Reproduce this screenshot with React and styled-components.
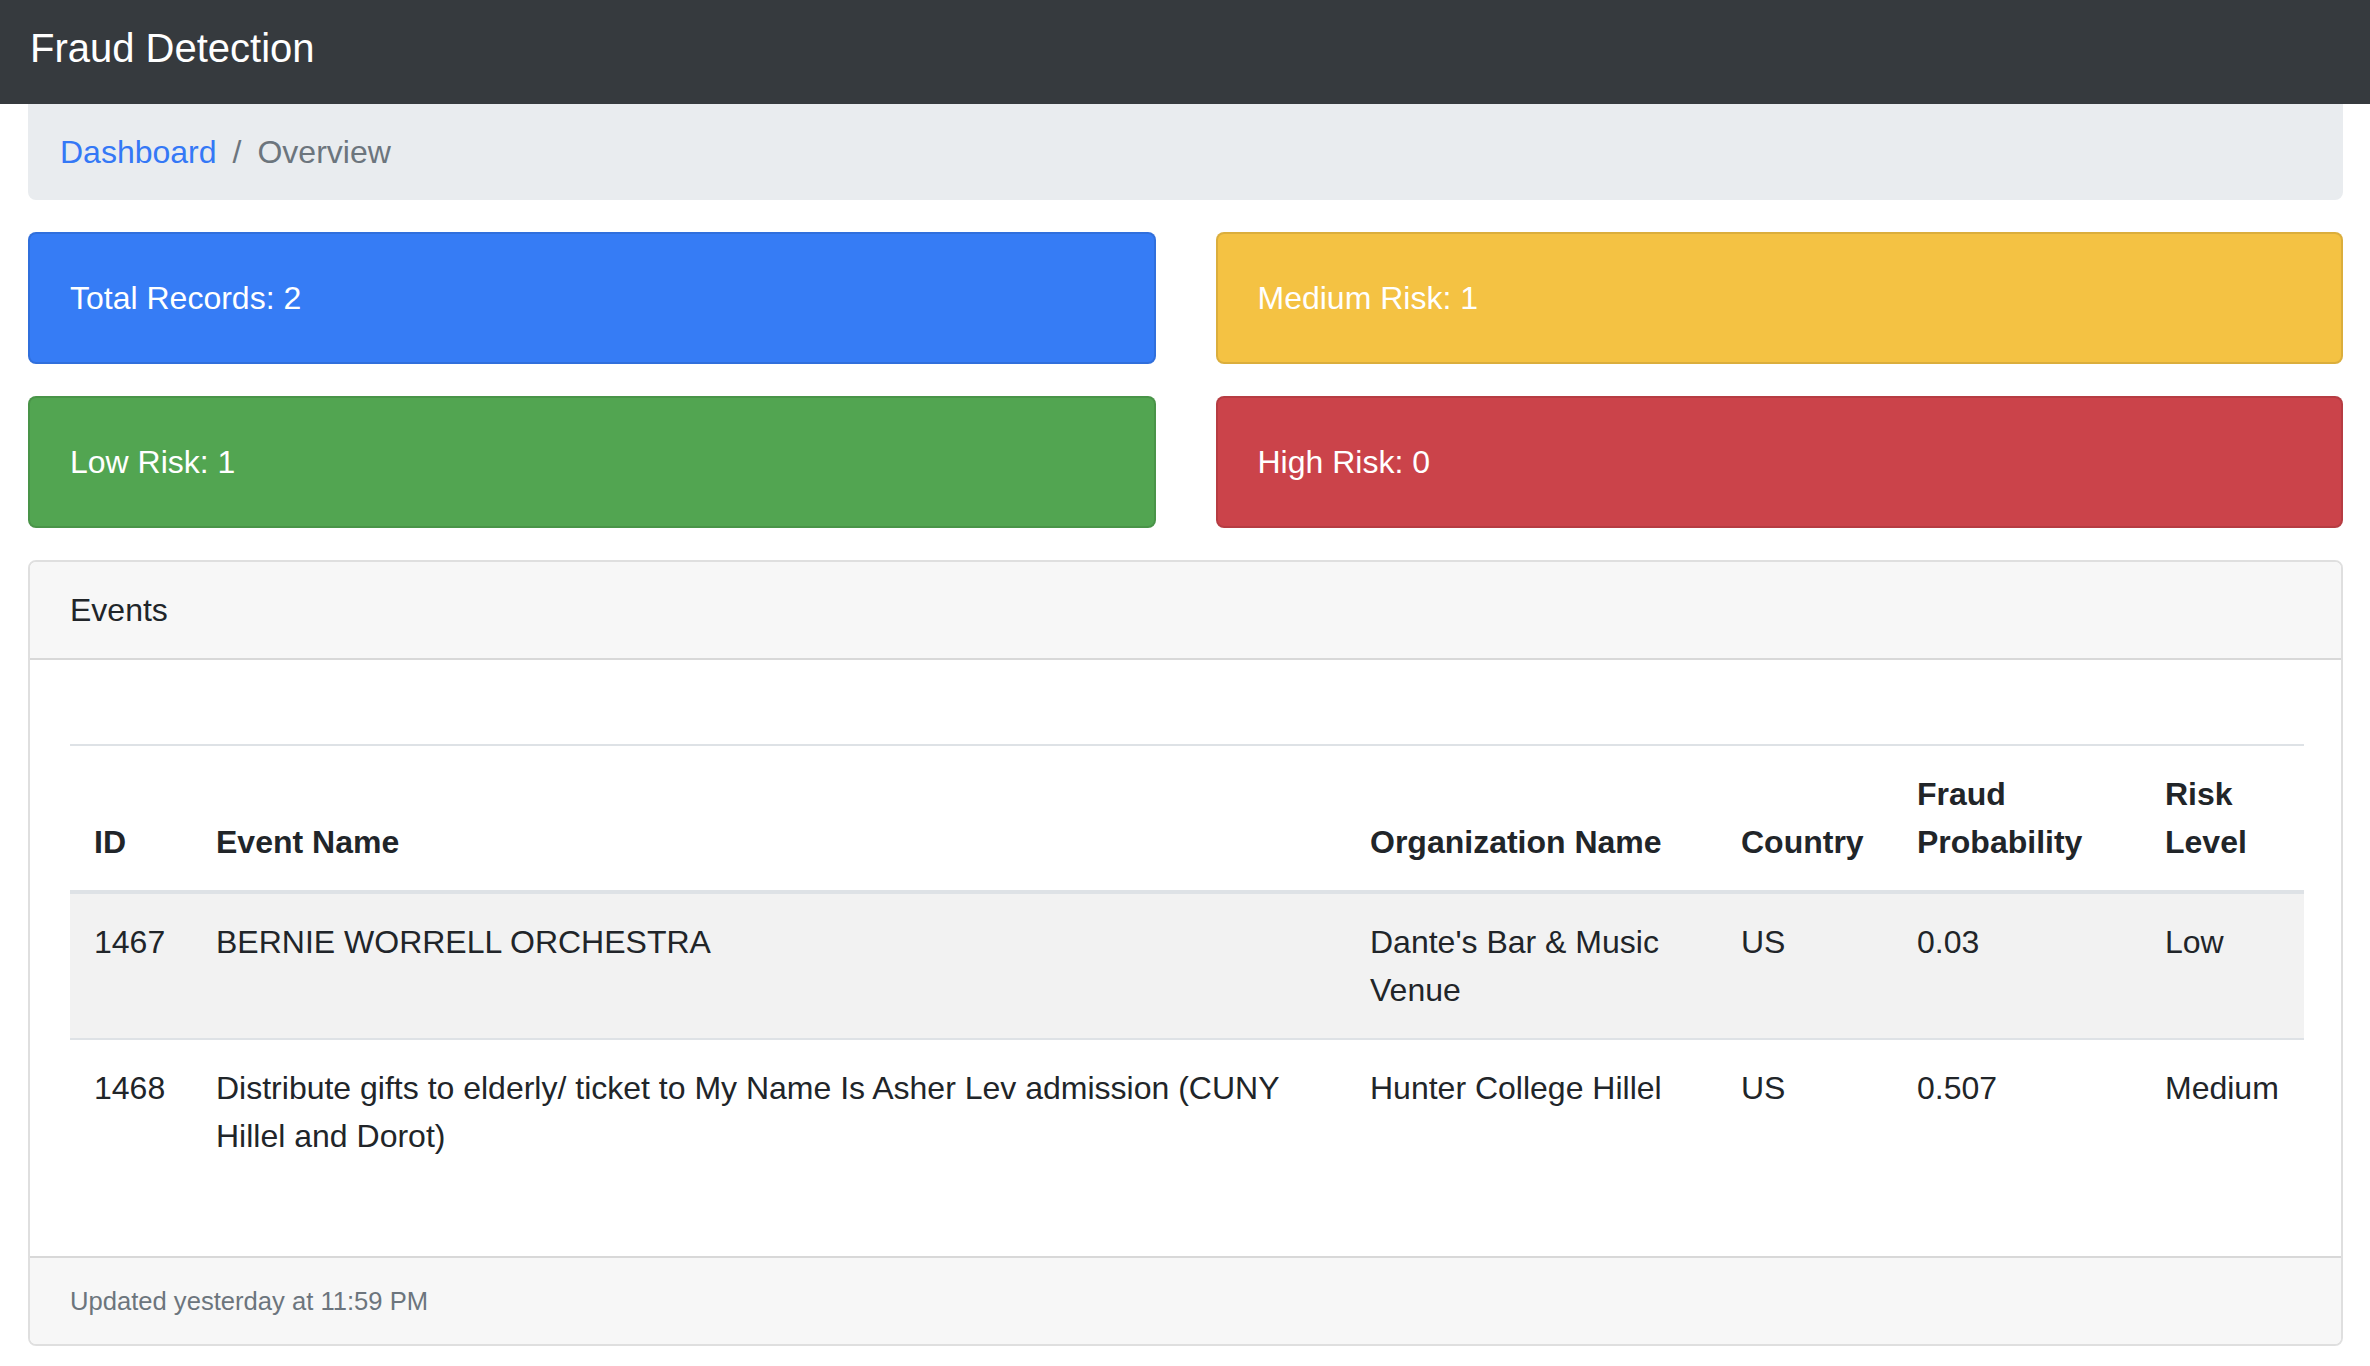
import React from 'react';
import styled, { createGlobalStyle } from 'styled-components';

const GlobalStyle = createGlobalStyle`
    * {
        box-sizing: border-box;
    }
    body {
        margin: 0;
        background: #fff;
        color: #212529;
        font-family: "Liberation Sans", Arial, Helvetica, sans-serif;
        font-size: 32px;
        line-height: 48px;
    }
`;

const stats = [
    { label: 'Total Records', value: 2, tone: 'primary' },
    { label: 'Medium Risk', value: 1, tone: 'warning' },
    { label: 'Low Risk', value: 1, tone: 'success' },
    { label: 'High Risk', value: 0, tone: 'danger' },
];

const events = [
    {
        id: 1467,
        name: 'BERNIE WORRELL ORCHESTRA',
        org: "Dante's Bar & Music Venue",
        country: 'US',
        probability: 0.03,
        risk: 'Low',
    },
    {
        id: 1468,
        name: 'Distribute gifts to elderly/ ticket to My Name Is Asher Lev admission (CUNY Hillel and Dorot)',
        org: 'Hunter College Hillel',
        country: 'US',
        probability: 0.507,
        risk: 'Medium',
    },
];

const columns = [
    { title: 'ID', width: 122 },
    { title: 'Event Name', width: 1154 },
    { title: 'Organization Name', width: 371 },
    { title: 'Country', width: 176 },
    { title: 'Fraud Probability', width: 248 },
    { title: 'Risk Level', width: 163 },
];

const toneColors = {
    primary: '#367cf5',
    warning: '#f4c243',
    success: '#52a551',
    danger: '#cb434a',
};

const App = () => {
    return (
        <>
            <GlobalStyle />
            <Navbar>
                <Brand>Fraud Detection</Brand>
            </Navbar>
            <Content>
                <Breadcrumb>
                    <Crumb href="#">Dashboard</Crumb>
                    <Separator>/</Separator>
                    <ActiveCrumb>Overview</ActiveCrumb>
                </Breadcrumb>

                <StatGrid>
                    {stats.map((s) => (
                        <StatCard key={s.label} tone={s.tone}>
                            {s.label}: {s.value}
                        </StatCard>
                    ))}
                </StatGrid>

                <Card>
                    <CardHeader>Events</CardHeader>
                    <CardBody>
                        <Table>
                            <colgroup>
                                {columns.map((c) => (
                                    <col key={c.title} style={{ width: c.width }} />
                                ))}
                            </colgroup>
                            <thead>
                                <tr>
                                    {columns.map((c) => (
                                        <Th key={c.title}>{c.title}</Th>
                                    ))}
                                </tr>
                            </thead>
                            <tbody>
                                {events.map((e, i) => (
                                    <Row key={e.id} striped={i % 2 === 0}>
                                        <Td>{e.id}</Td>
                                        <Td>{e.name}</Td>
                                        <Td>{e.org}</Td>
                                        <Td>{e.country}</Td>
                                        <Td>{e.probability}</Td>
                                        <Td>{e.risk}</Td>
                                    </Row>
                                ))}
                            </tbody>
                        </Table>
                    </CardBody>
                    <CardFooter>Updated yesterday at 11:59 PM</CardFooter>
                </Card>
            </Content>
        </>
    );
};

const Navbar = styled.nav`
    display: flex;
    align-items: center;
    height: 104px;
    padding: 0 30px;
    background-color: #363a3e;
`;

const Brand = styled.span`
    color: #fff;
    font-size: 40px;
    line-height: 60px;
    margin-top: -8px;
`;

const Content = styled.main`
    padding: 0 27px 40px 28px;
`;

const Breadcrumb = styled.div`
    display: flex;
    align-items: center;
    padding: 24px 32px;
    margin-bottom: 32px;
    background-color: #e9ecef;
    border-radius: 0 0 8px 8px;
`;

const Crumb = styled.a`
    color: #3478f6;
    text-decoration: none;
`;

const Separator = styled.span`
    color: #6c757d;
    padding: 0 16px;
`;

const ActiveCrumb = styled.span`
    color: #6c757d;
`;

const StatGrid = styled.div`
    display: grid;
    grid-template-columns: 1fr 1fr;
    column-gap: 60px;
    row-gap: 32px;
    margin-bottom: 32px;
`;

const StatCard = styled.div`
    padding: 40px;
    color: #fff;
    background-color: ${(p) => toneColors[p.tone]};
    border: 2px solid rgba(0, 0, 0, 0.1);
    border-radius: 8px;
`;

const Card = styled.section`
    border: 2px solid rgba(0, 0, 0, 0.125);
    border-radius: 8px;
    overflow: hidden;
`;

const CardHeader = styled.div`
    padding: 24px 40px;
    background-color: #f7f7f7;
    border-bottom: 2px solid rgba(0, 0, 0, 0.125);
`;

const CardBody = styled.div`
    padding: 84px 40px 40px;
`;

const Table = styled.table`
    width: 100%;
    table-layout: fixed;
    border-collapse: collapse;
    margin-bottom: 32px;
`;

const Th = styled.th`
    padding: 24px;
    text-align: left;
    vertical-align: bottom;
    font-weight: 700;
    border-top: 2px solid #dee2e6;
    border-bottom: 4px solid #dee2e6;
`;

const Row = styled.tr`
    background-color: ${(p) => (p.striped ? '#f2f2f2' : 'transparent')};
`;

const Td = styled.td`
    padding: 24px;
    vertical-align: top;
    border-top: 2px solid #dee2e6;
`;

const CardFooter = styled.div`
    padding: 24px 40px;
    font-size: 25.6px;
    line-height: 38px;
    color: #6c757d;
    background-color: #f7f7f7;
    border-top: 2px solid rgba(0, 0, 0, 0.125);
`;

export default App;
